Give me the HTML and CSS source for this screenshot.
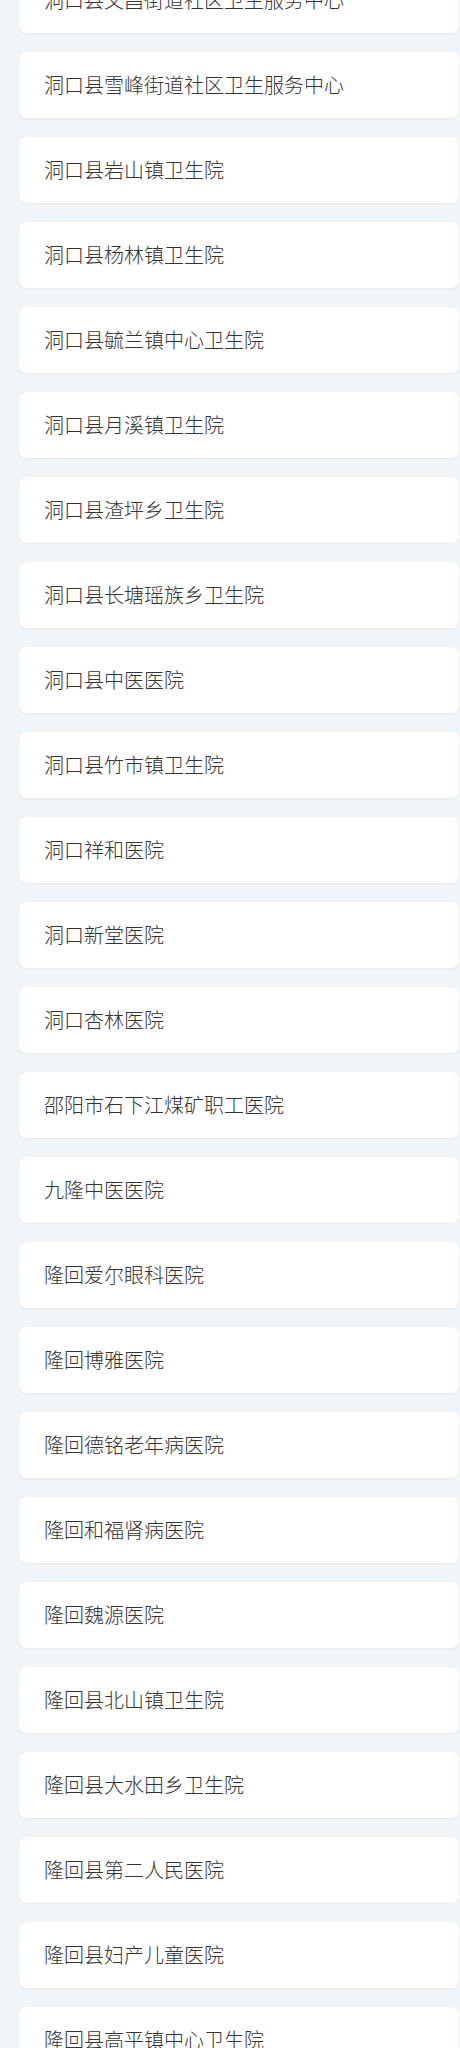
FILE: index.html
```html
<!DOCTYPE html>
<html lang="zh">
<head>
<meta charset="utf-8">
<link rel="stylesheet" href="styles.css">
</head>
<body>
<ul class="list">
  <li class="card">洞口县文昌街道社区卫生服务中心</li>
  <li class="card">洞口县雪峰街道社区卫生服务中心</li>
  <li class="card">洞口县岩山镇卫生院</li>
  <li class="card">洞口县杨林镇卫生院</li>
  <li class="card">洞口县毓兰镇中心卫生院</li>
  <li class="card">洞口县月溪镇卫生院</li>
  <li class="card">洞口县渣坪乡卫生院</li>
  <li class="card">洞口县长塘瑶族乡卫生院</li>
  <li class="card">洞口县中医医院</li>
  <li class="card">洞口县竹市镇卫生院</li>
  <li class="card">洞口祥和医院</li>
  <li class="card">洞口新堂医院</li>
  <li class="card">洞口杏林医院</li>
  <li class="card">邵阳市石下江煤矿职工医院</li>
  <li class="card">九隆中医医院</li>
  <li class="card">隆回爱尔眼科医院</li>
  <li class="card">隆回博雅医院</li>
  <li class="card">隆回德铭老年病医院</li>
  <li class="card">隆回和福肾病医院</li>
  <li class="card">隆回魏源医院</li>
  <li class="card">隆回县北山镇卫生院</li>
  <li class="card">隆回县大水田乡卫生院</li>
  <li class="card">隆回县第二人民医院</li>
  <li class="card">隆回县妇产儿童医院</li>
  <li class="card">隆回县高平镇中心卫生院</li>
</ul>
</body>
</html>
```
FILE: styles.css
```css
html, body {
  margin: 0;
  padding: 0;
  background: #f1f5f8;
  overflow: hidden;
}
body {
  font-family: "Noto Sans CJK SC", "Noto Sans", sans-serif;
  font-weight: 300;
  color: #333;
}
.list {
  list-style: none;
  margin: -33px 1px 0 19px;
  padding: 0;
  display: flex;
  flex-direction: column;
  gap: 19px;
}
.card {
  background: #fff;
  border-radius: 8px;
  height: 66px;
  display: flex;
  align-items: center;
  padding-left: 25px;
  font-size: 20px;
  line-height: 1;
  box-shadow: 0 1px 3px rgba(0, 0, 0, 0.05);
}
```
